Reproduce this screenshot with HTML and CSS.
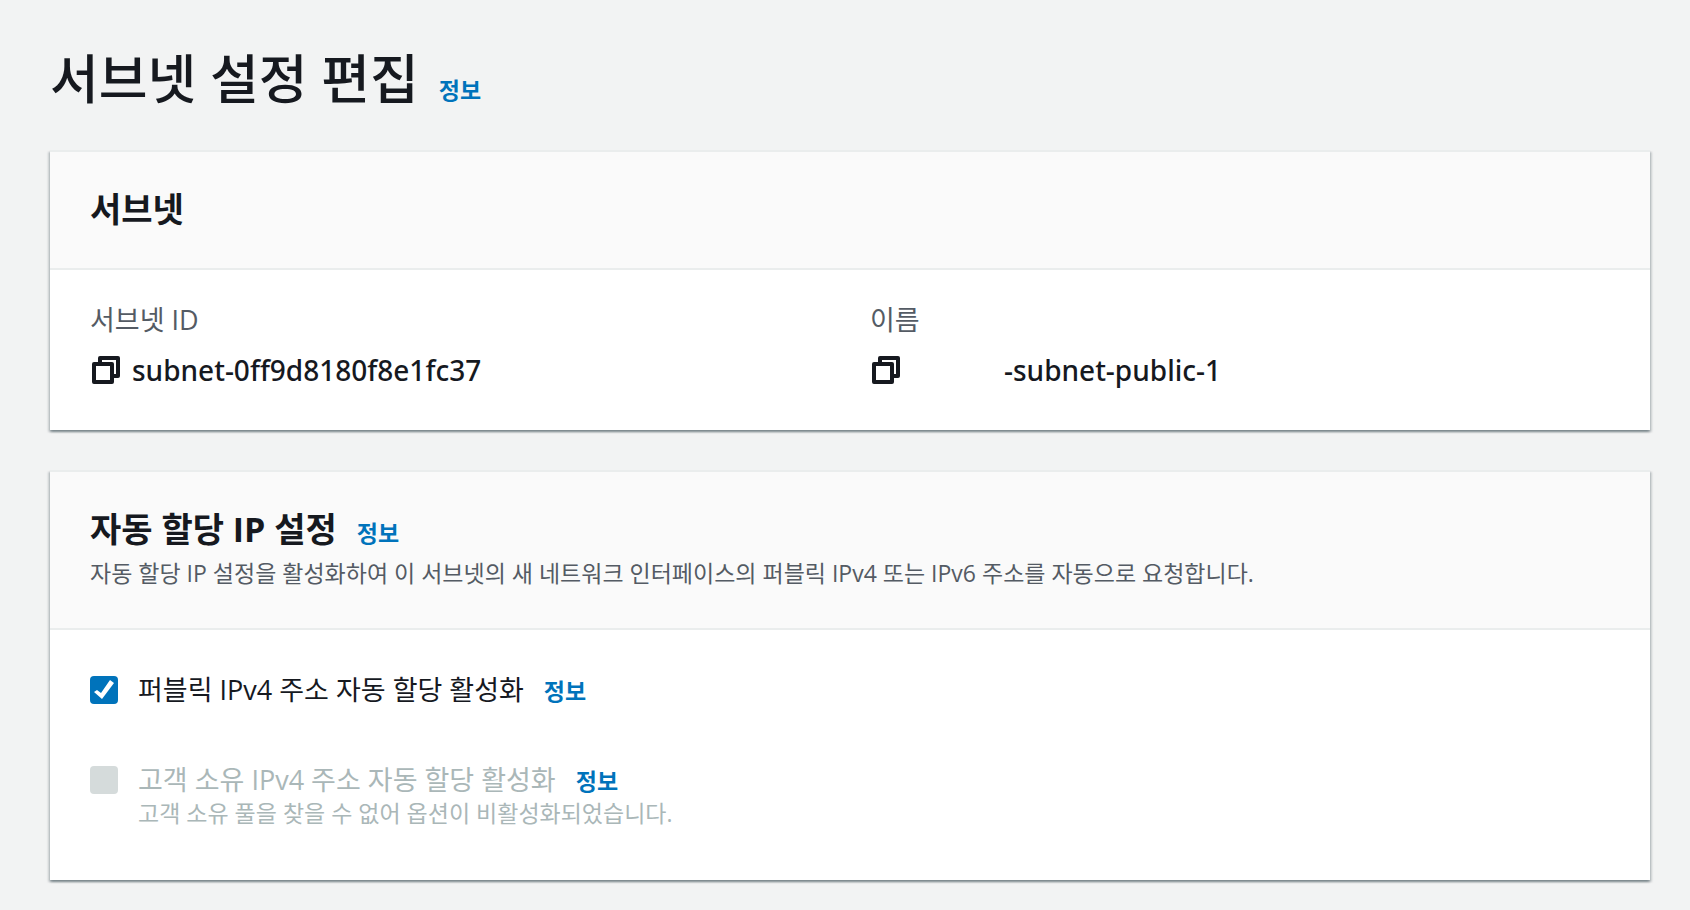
FILE: index.html
```html
<!DOCTYPE html>
<html lang="ko">
<head>
<meta charset="utf-8">
<meta name="viewport" content="width=device-width, initial-scale=1">
<title>서브넷 설정 편집</title>
<link rel="stylesheet" href="styles.css">
</head>
<body>
<main class="page">
  <header class="page-header">
    <h1 class="page-title">서브넷 설정 편집</h1>
    <a class="info" href="#">정보</a>
  </header>

  <section class="card">
    <header class="card-header">
      <h2 class="card-title">서브넷</h2>
    </header>
    <dl class="details">
      <div class="detail">
        <dt class="detail-label">서브넷 ID</dt>
        <dd class="detail-value">
          <button class="copy" type="button" aria-label="서브넷 ID 복사">
            <svg class="copy-icon" viewBox="0 0 28 28" aria-hidden="true"><path d="M8 8V2H26V20H20"/><path d="M2 8H20V26H2Z"/></svg>
          </button>
          <span>subnet-0ff9d8180f8e1fc37</span>
        </dd>
      </div>
      <div class="detail">
        <dt class="detail-label">이름</dt>
        <dd class="detail-value">
          <button class="copy" type="button" aria-label="이름 복사">
            <svg class="copy-icon" viewBox="0 0 28 28" aria-hidden="true"><path d="M8 8V2H26V20H20"/><path d="M2 8H20V26H2Z"/></svg>
          </button>
          <span class="masked-prefix">-subnet-public-1</span>
        </dd>
      </div>
    </dl>
  </section>

  <section class="card">
    <header class="card-header">
      <div class="title-row">
        <h2 class="card-title">자동 할당 IP 설정</h2>
        <a class="info" href="#">정보</a>
      </div>
      <p class="card-description">자동 할당 IP 설정을 활성화하여 이 서브넷의 새 네트워크 인터페이스의 퍼블릭 IPv4 또는 IPv6 주소를 자동으로 요청합니다.</p>
    </header>
    <div class="options">
      <div class="option">
        <input class="checkbox" type="checkbox" id="public-ipv4" checked>
        <div class="option-text">
          <div class="option-row">
            <label class="option-label" for="public-ipv4">퍼블릭 IPv4 주소 자동 할당 활성화</label>
            <a class="info" href="#">정보</a>
          </div>
        </div>
      </div>
      <div class="option">
        <input class="checkbox" type="checkbox" id="customer-ipv4" aria-describedby="customer-ipv4-note" disabled>
        <div class="option-text">
          <div class="option-row">
            <label class="option-label option-label-disabled" for="customer-ipv4">고객 소유 IPv4 주소 자동 할당 활성화</label>
            <a class="info" href="#">정보</a>
          </div>
          <p class="option-note" id="customer-ipv4-note">고객 소유 풀을 찾을 수 없어 옵션이 비활성화되었습니다.</p>
        </div>
      </div>
    </div>
  </section>
</main>
</body>
</html>
```
FILE: styles.css
```css
* {
  box-sizing: border-box;
}

body {
  margin: 0;
  background: #f2f3f3;
  color: #16191f;
  font-family: "Open Sans", "Noto Sans CJK KR", sans-serif;
  font-size: 27px;
  line-height: 40px;
}

h1, h2, p, dl, dd {
  margin: 0;
}

.page {
  display: flex;
  flex-direction: column;
  gap: 40px;
  padding: 48px 40px 20px 50px;
}

.page-header,
.title-row,
.option-row {
  display: flex;
  flex-wrap: wrap;
  align-items: baseline;
  column-gap: 20px;
}

.page-title {
  font-size: 53px;
  font-weight: 500;
  line-height: 62px;
}

.info {
  color: #0073bb;
  font-size: 23px;
  font-weight: 700;
  line-height: 24px;
  text-decoration: none;
}

.card {
  background: #fff;
  border-top: 2px solid #eaeded;
  box-shadow: 0 2px 2px rgba(0, 28, 36, 0.3), 2px 2px 2px rgba(0, 28, 36, 0.15), -2px 2px 2px rgba(0, 28, 36, 0.15);
}

.card-header {
  padding: 36px 40px 38px;
  background: #fafafa;
  border-bottom: 2px solid #eaeded;
}

.card-title {
  font-size: 34px;
  font-weight: 700;
  line-height: 42px;
}

.card-description {
  margin-top: 6px;
  color: #545b64;
  font-size: 23px;
  line-height: 34px;
}

.details {
  display: grid;
  grid-template-columns: 1fr 1fr;
  gap: 40px;
  padding: 30px 40px 40px;
}

.detail {
  display: grid;
  gap: 10px;
}

.detail-label {
  color: #545b64;
}

.detail-value {
  display: flex;
  align-items: center;
  gap: 10px;
  font-family: "Noto Sans", "Noto Sans CJK KR", sans-serif;
  font-size: 28px;
  font-weight: 500;
}

.copy {
  display: flex;
  padding: 0 2px;
  border: 0;
  background: none;
  color: inherit;
  cursor: pointer;
}

.copy-icon {
  width: 28px;
  height: 28px;
  fill: none;
  stroke: currentColor;
  stroke-width: 4;
  stroke-linejoin: round;
}

.masked-prefix {
  padding-left: 92px;
}

.options {
  display: grid;
  gap: 50px;
  padding: 40px 40px 54px;
}

.option {
  display: flex;
  gap: 20px;
}

.checkbox {
  flex: none;
  width: 28px;
  height: 28px;
  margin: 6px 0;
  appearance: none;
  background: #fff;
  border: 2px solid #687078;
  border-radius: 4px;
}

.checkbox:checked {
  background: #0073bb;
  border: 0;
}

.checkbox:checked::before {
  content: "";
  display: block;
  width: 28px;
  height: 28px;
  background: #fff;
  clip-path: polygon(4px 16px, 7px 14px, 11px 17px, 20px 4px, 24px 7px, 12px 23px);
}

.checkbox:disabled {
  background: #d5dbdb;
  border: 0;
}

.option-label-disabled,
.option-note {
  color: #aab7b8;
}

.option-note {
  font-size: 23px;
  line-height: 26px;
}
```
